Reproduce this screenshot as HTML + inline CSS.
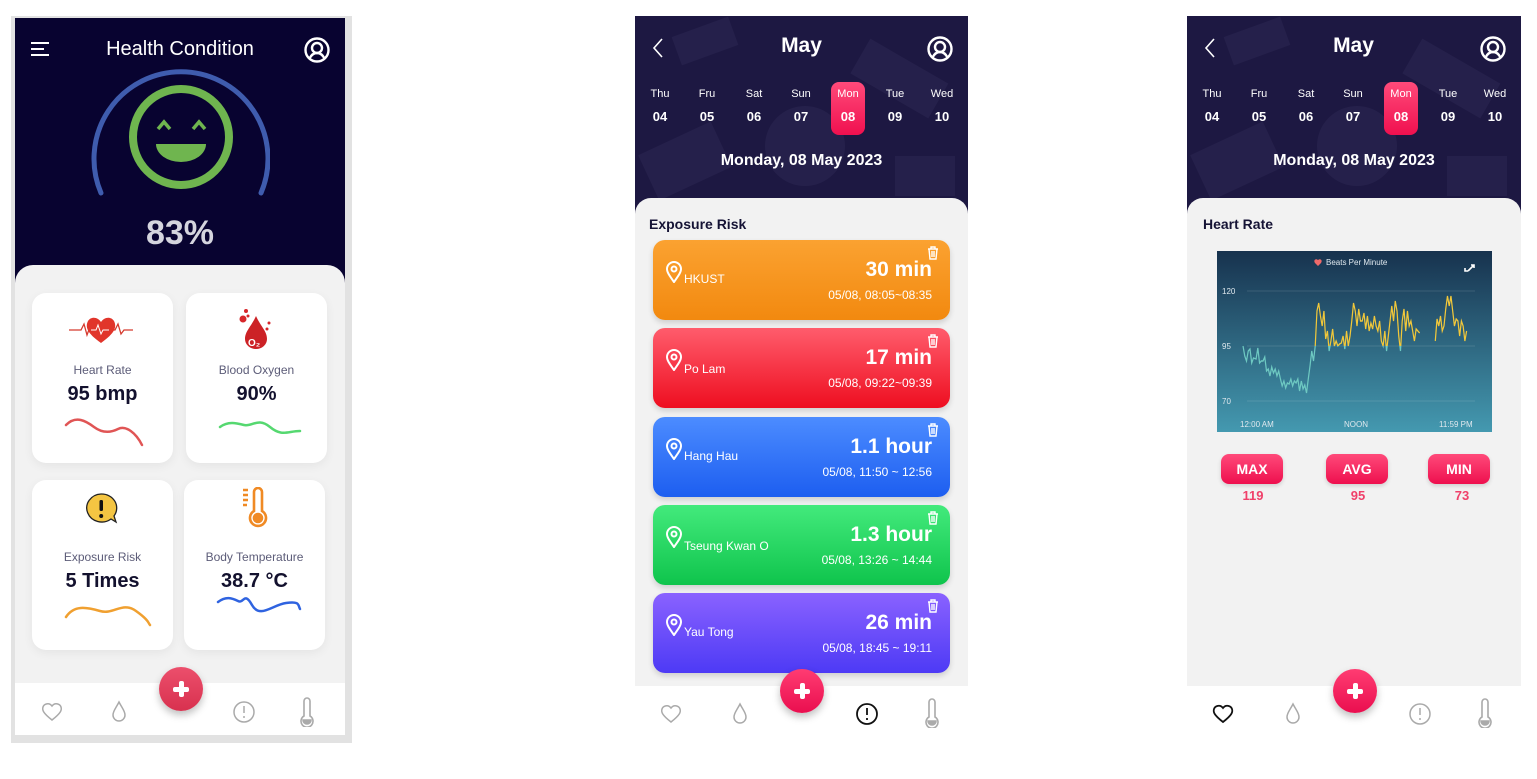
<!DOCTYPE html>
<html><head><meta charset="utf-8"><style>
*{margin:0;padding:0;box-sizing:border-box}
body{width:1537px;height:779px;background:#fff;position:relative;overflow:hidden;font-family:"Liberation Sans",Arial,sans-serif}
.a{position:absolute}
.hdr{background:#1d1842;overflow:hidden}
.card{position:absolute;background:#fff;border-radius:14px;box-shadow:0 3px 10px rgba(0,0,0,.06);text-align:center}
.card .l{position:absolute;left:0;right:0;top:70px;font-size:12px;color:#5c5c78}
.card .v{position:absolute;left:0;right:0;top:90px;font-size:20px;font-weight:bold;color:#13112e}
.day{position:absolute;width:34px;text-align:center;color:#fff;font-size:11px}
.day b{display:block;font-size:13px;margin-top:9px}
.sel{background:linear-gradient(#ff4a7a,#f0104f);border-radius:8px;height:53px;padding-top:6px}
.er{position:absolute;left:18px;width:297px;height:80px;border-radius:12px;color:#fff;box-shadow:0 3px 6px rgba(0,0,0,.15)}
.er .t{position:absolute;right:18px;top:18px;font-size:21px;font-weight:bold}
.er .d{position:absolute;right:18px;top:48px;font-size:12px}
.er .p{position:absolute;left:31px;top:32px;font-size:12px}
.er svg.pin{position:absolute;left:13px;top:21px}
.er svg.tr{position:absolute;right:11px;top:6px}
.fab{position:absolute;width:44px;height:44px;border-radius:50%;background:linear-gradient(#ff3c72,#ea0e4f);box-shadow:0 4px 8px rgba(0,0,0,.25)}
.fab:before{content:"";position:absolute;left:14px;top:19.5px;width:16px;height:5px;background:#fff;border-radius:2px}
.fab:after{content:"";position:absolute;left:19.5px;top:14px;width:5px;height:16px;background:#fff;border-radius:2px}
.btn{position:absolute;width:62px;height:30px;border-radius:8px;background:linear-gradient(#ff4a7a,#ee0f4e);color:#fff;font-weight:bold;font-size:14px;text-align:center;line-height:30px;box-shadow:0 2px 4px rgba(0,0,0,.15)}
.num{position:absolute;width:62px;text-align:center;color:#f0406a;font-weight:bold;font-size:13px}
</style></head><body>

<!-- Phone 1 -->
<div class="a" style="left:11px;top:16px;width:341px;height:727px;background:#e2e2e2"></div>
<div class="a hdr" style="left:15px;top:18px;width:330px;height:270px;background:#080330"></div>
<div class="a" style="left:31px;top:42px;width:18px;height:2px;background:#fff"></div>
<div class="a" style="left:31px;top:48px;width:13px;height:2px;background:#fff"></div>
<div class="a" style="left:31px;top:54px;width:18px;height:2px;background:#fff"></div>
<div class="a" style="left:80px;top:38px;width:200px;text-align:center;color:#fff;font-size:20px">Health Condition</div>
<svg class="a" style="left:303px;top:36px" width="28" height="28" viewBox="0 0 28 28" fill="none" stroke="#fff" stroke-width="2.4"><circle cx="14" cy="14" r="11.5"/><circle cx="14" cy="12" r="5"/><path d="M6.5 22.5c2-4 5-5.5 7.5-5.5s5.5 1.5 7.5 5.5"/></svg>
<svg class="a" style="left:90px;top:60px" width="180" height="145" viewBox="0 0 180 145" fill="none"><path d="M11 133 A87 87 0 1 1 171 133" stroke="#3f5cae" stroke-width="5" stroke-linecap="round"/><circle cx="91" cy="77" r="48" stroke="#6fb54f" stroke-width="8"/><path d="M68 69l6-7 6 7M103 69l6-7 6 7" stroke="#6fb54f" stroke-width="3.5"/><path d="M66 84h50a25 18 0 0 1-50 0z" fill="#6fb54f"/></svg>
<div class="a" style="left:80px;top:214px;width:200px;text-align:center;color:#d5d5de;font-size:34px;font-weight:bold">83%</div>
<div class="a" style="left:15px;top:265px;width:330px;height:420px;background:#f2f2f2;border-radius:18px 18px 0 0"></div>
<div class="card" style="left:32px;top:293px;width:141px;height:170px">
<svg class="a" style="left:37px;top:22px" width="64" height="30" viewBox="0 0 64 30" fill="none"><path d="M0 15h12l3-6 3 11 3-8h6M40 15h6l3-6 3 10 3-4h9" stroke="#d53a2e" stroke-width="1.3"/><path d="M32 28C18 18 16 12 19 6c3-5 10-4 13 1 3-5 10-6 13-1 3 6 1 12-13 22z" fill="#e1352b"/><path d="M22 15h5l2-5 3 9 2-4h6" stroke="#fff" stroke-width="1"/></svg>
<div class="l">Heart Rate</div><div class="v">95 bmp</div>
<svg class="a" style="left:32px;top:122px" width="80" height="32" viewBox="0 0 80 32" fill="none"><path d="M2 10C12 0 22 6 30 12s16 6 24 2 18 4 24 16" stroke="#e05555" stroke-width="2.5" stroke-linecap="round"/></svg></div>
<div class="card" style="left:186px;top:293px;width:141px;height:170px">
<svg class="a" style="left:50px;top:13px" width="40" height="46" viewBox="0 0 40 46"><circle cx="10" cy="5" r="2" fill="#d7262a"/><circle cx="7" cy="13" r="3.5" fill="#d7262a"/><circle cx="12" cy="10" r="1.5" fill="#d7262a"/><circle cx="33" cy="17" r="1.5" fill="#d7262a"/><circle cx="31" cy="23" r="1.5" fill="#d7262a"/><path d="M20 10C15 21 9 25 9 33a11 10 0 0 0 22 0c0-8-6-12-11-23z" fill="#cc2226"/><text x="12" y="40" font-size="10" font-weight="bold" fill="#fff" font-family="Liberation Sans">O₂</text></svg>
<div class="l">Blood Oxygen</div><div class="v">90%</div>
<svg class="a" style="left:32px;top:124px" width="84" height="20" viewBox="0 0 84 20" fill="none"><path d="M2 10C10 4 18 6 26 8s14-8 26 2 18 4 30 4" stroke="#55d870" stroke-width="2.5" stroke-linecap="round"/></svg></div>
<div class="card" style="left:32px;top:480px;width:141px;height:170px">
<svg class="a" style="left:52px;top:12px" width="36" height="34" viewBox="0 0 36 34"><path d="M17 2a15 14 0 1 0 10 25l5 3-2-6A15 14 0 0 0 17 2z" fill="#f4c542" stroke="#222" stroke-width="1.3"/><rect x="15.5" y="8" width="3.5" height="11" rx="1.5" fill="#111"/><circle cx="17.2" cy="24" r="2" fill="#111"/></svg>
<div class="l">Exposure Risk</div><div class="v">5 Times</div>
<svg class="a" style="left:32px;top:115px" width="88" height="32" viewBox="0 0 88 32" fill="none"><path d="M2 22C10 10 22 12 36 16s22-10 36 0 12 12 14 14" stroke="#f0a030" stroke-width="2.5" stroke-linecap="round"/></svg></div>
<div class="card" style="left:184px;top:480px;width:141px;height:170px">
<svg class="a" style="left:56px;top:7px" width="30" height="42" viewBox="0 0 30 42" fill="none" stroke="#f08a24" stroke-width="2.6"><path d="M3 3h5M3 8h5M3 13h5M3 18h4"/><path d="M14 24V5a4 4 0 0 1 8 0v19a8 8 0 1 1-8 0z"/><circle cx="18" cy="31" r="4" fill="#f08a24"/></svg>
<div class="l">Body Temperature</div><div class="v">38.7 °C</div>
<svg class="a" style="left:32px;top:112px" width="86" height="24" viewBox="0 0 86 24" fill="none"><path d="M2 10c8-6 14-4 20-1s6-10 14 4 20 0 34-2 12 2 14 6" stroke="#2f63e0" stroke-width="2.5" stroke-linecap="round"/></svg></div>
<div class="a" style="left:15px;top:683px;width:330px;height:52px;background:#fff"></div>
<div class="fab" style="left:159px;top:667px;background:linear-gradient(#ec4f6c,#d8314f)"></div>
<svg class="a" style="left:41px;top:702px" width="22" height="20" viewBox="0 0 22 20" fill="none" stroke="#aaa" stroke-width="1.5"><path d="M11 18C2 11 1 8 2 5s6-5 9-1c3-4 8-2 9 1s0 6-9 13z"/></svg>
<svg class="a" style="left:110px;top:700px" width="18" height="22" viewBox="0 0 18 22" fill="none" stroke="#aaa" stroke-width="1.5"><path d="M9 2C6 8 3 11 3 15a6 6 0 0 0 12 0c0-4-3-7-6-13z"/></svg>
<svg class="a" style="left:232px;top:700px" width="24" height="24" viewBox="0 0 24 24" fill="none" stroke="#aaa" stroke-width="1.5"><circle cx="12" cy="12" r="10"/><path d="M12 6v7M12 16v2"/></svg>
<svg class="a" style="left:298px;top:697px" width="18" height="30" viewBox="0 0 18 30" fill="none" stroke="#aaa" stroke-width="1.6"><path d="M6 19V4a3 3 0 0 1 6 0v15a6 6 0 1 1-6 0z"/><path d="M5 23a4 4 0 0 0 8 0z" fill="#aaa"/></svg>

<!-- Phone 2 & 3 headers -->
<div class="a hdr" style="left:635px;top:16px;width:333px;height:200px">
<svg width="333" height="200" style="opacity:.3"><g fill="#3a3560"><rect x="40" y="10" width="60" height="30" transform="rotate(-20 70 25)"/><rect x="220" y="40" width="90" height="40" transform="rotate(30 260 60)"/><rect x="10" y="120" width="80" height="50" transform="rotate(-25 50 145)"/><circle cx="170" cy="130" r="40"/><rect x="260" y="140" width="60" height="40"/></g></svg></div>
<div class="a hdr" style="left:1187px;top:16px;width:334px;height:200px">
<svg width="334" height="200" style="opacity:.3"><g fill="#3a3560"><rect x="40" y="10" width="60" height="30" transform="rotate(-20 70 25)"/><rect x="220" y="40" width="90" height="40" transform="rotate(30 260 60)"/><rect x="10" y="120" width="80" height="50" transform="rotate(-25 50 145)"/><circle cx="170" cy="130" r="40"/><rect x="260" y="140" width="60" height="40"/></g></svg></div>

<svg class="a" style="left:652px;top:38px" width="12" height="20" viewBox="0 0 12 20" fill="none" stroke="#fff" stroke-width="1.6"><path d="M10 1L2 10l8 9"/></svg>
<div class="a" style="left:735px;top:34px;width:133px;text-align:center;color:#fff;font-size:21px;font-weight:bold">May</div>
<svg class="a" style="left:926px;top:35px" width="28" height="28" viewBox="0 0 28 28" fill="none" stroke="#fff" stroke-width="2.4"><circle cx="14" cy="14" r="11.5"/><circle cx="14" cy="12" r="5"/><path d="M6.5 22.5c2-4 5-5.5 7.5-5.5s5.5 1.5 7.5 5.5"/></svg>
<div class="day" style="left:643px;top:88px">Thu<b>04</b></div>
<div class="day" style="left:690px;top:88px">Fru<b>05</b></div>
<div class="day" style="left:737px;top:88px">Sat<b>06</b></div>
<div class="day" style="left:784px;top:88px">Sun<b>07</b></div>
<div class="day sel" style="left:831px;top:82px">Mon<b>08</b></div>
<div class="day" style="left:878px;top:88px">Tue<b>09</b></div>
<div class="day" style="left:925px;top:88px">Wed<b>10</b></div>
<div class="a" style="left:635px;top:152px;width:333px;text-align:center;color:#fff;font-size:16px;font-weight:bold">Monday, 08 May 2023</div>

<svg class="a" style="left:1204px;top:38px" width="12" height="20" viewBox="0 0 12 20" fill="none" stroke="#fff" stroke-width="1.6"><path d="M10 1L2 10l8 9"/></svg>
<div class="a" style="left:1287px;top:34px;width:133px;text-align:center;color:#fff;font-size:21px;font-weight:bold">May</div>
<svg class="a" style="left:1479px;top:35px" width="28" height="28" viewBox="0 0 28 28" fill="none" stroke="#fff" stroke-width="2.4"><circle cx="14" cy="14" r="11.5"/><circle cx="14" cy="12" r="5"/><path d="M6.5 22.5c2-4 5-5.5 7.5-5.5s5.5 1.5 7.5 5.5"/></svg>
<div class="day" style="left:1195px;top:88px">Thu<b>04</b></div>
<div class="day" style="left:1242px;top:88px">Fru<b>05</b></div>
<div class="day" style="left:1289px;top:88px">Sat<b>06</b></div>
<div class="day" style="left:1336px;top:88px">Sun<b>07</b></div>
<div class="day sel" style="left:1384px;top:82px">Mon<b>08</b></div>
<div class="day" style="left:1431px;top:88px">Tue<b>09</b></div>
<div class="day" style="left:1478px;top:88px">Wed<b>10</b></div>
<div class="a" style="left:1187px;top:152px;width:334px;text-align:center;color:#fff;font-size:16px;font-weight:bold">Monday, 08 May 2023</div>

<!-- Phone 2 content -->
<div class="a" style="left:635px;top:198px;width:333px;height:490px;background:#f2f2f2;border-radius:16px 16px 0 0">
<div class="a" style="left:14px;top:18px;font-size:14px;font-weight:bold;color:#151335">Exposure Risk</div>
<div class="er" style="top:42px;background:linear-gradient(#fba231,#f2890f)"><svg class="pin" width="16" height="22" viewBox="0 0 16 22" fill="none" stroke="#fff" stroke-width="2"><path d="M8 21C3 14 1 11 1 8a7 7 0 0 1 14 0c0 3-2 6-7 13z"/><circle cx="8" cy="8" r="2.5"/></svg><svg class="tr" width="12" height="14" viewBox="0 0 12 14" fill="none" stroke="#fff" stroke-width="1.4"><path d="M1 3h10M4 3V1h4v2M2 3l1 10h6l1-10M5 5v6M7 5v6"/></svg><div class="p">HKUST</div><div class="t">30 min</div><div class="d">05/08, 08:05~08:35</div></div>
<div class="er" style="top:130px;background:linear-gradient(#ff5c6c,#ee0e20)"><svg class="pin" width="16" height="22" viewBox="0 0 16 22" fill="none" stroke="#fff" stroke-width="2"><path d="M8 21C3 14 1 11 1 8a7 7 0 0 1 14 0c0 3-2 6-7 13z"/><circle cx="8" cy="8" r="2.5"/></svg><svg class="tr" width="12" height="14" viewBox="0 0 12 14" fill="none" stroke="#fff" stroke-width="1.4"><path d="M1 3h10M4 3V1h4v2M2 3l1 10h6l1-10M5 5v6M7 5v6"/></svg><div class="p" style="top:34px">Po Lam</div><div class="t">17 min</div><div class="d">05/08, 09:22~09:39</div></div>
<div class="er" style="top:219px;background:linear-gradient(#4c8cff,#1d5ef0)"><svg class="pin" width="16" height="22" viewBox="0 0 16 22" fill="none" stroke="#fff" stroke-width="2"><path d="M8 21C3 14 1 11 1 8a7 7 0 0 1 14 0c0 3-2 6-7 13z"/><circle cx="8" cy="8" r="2.5"/></svg><svg class="tr" width="12" height="14" viewBox="0 0 12 14" fill="none" stroke="#fff" stroke-width="1.4"><path d="M1 3h10M4 3V1h4v2M2 3l1 10h6l1-10M5 5v6M7 5v6"/></svg><div class="p">Hang Hau</div><div class="t">1.1 hour</div><div class="d">05/08, 11:50 ~ 12:56</div></div>
<div class="er" style="top:307px;background:linear-gradient(#43ea7c,#0fc44c)"><svg class="pin" width="16" height="22" viewBox="0 0 16 22" fill="none" stroke="#fff" stroke-width="2"><path d="M8 21C3 14 1 11 1 8a7 7 0 0 1 14 0c0 3-2 6-7 13z"/><circle cx="8" cy="8" r="2.5"/></svg><svg class="tr" width="12" height="14" viewBox="0 0 12 14" fill="none" stroke="#fff" stroke-width="1.4"><path d="M1 3h10M4 3V1h4v2M2 3l1 10h6l1-10M5 5v6M7 5v6"/></svg><div class="p" style="top:34px">Tseung Kwan O</div><div class="t">1.3 hour</div><div class="d">05/08,  13:26 ~ 14:44</div></div>
<div class="er" style="top:395px;background:linear-gradient(#8a62ff,#4d3af5)"><svg class="pin" width="16" height="22" viewBox="0 0 16 22" fill="none" stroke="#fff" stroke-width="2"><path d="M8 21C3 14 1 11 1 8a7 7 0 0 1 14 0c0 3-2 6-7 13z"/><circle cx="8" cy="8" r="2.5"/></svg><svg class="tr" width="12" height="14" viewBox="0 0 12 14" fill="none" stroke="#fff" stroke-width="1.4"><path d="M1 3h10M4 3V1h4v2M2 3l1 10h6l1-10M5 5v6M7 5v6"/></svg><div class="p">Yau Tong</div><div class="t">26 min</div><div class="d">05/08,  18:45 ~ 19:11</div></div>
</div>
<div class="a" style="left:635px;top:686px;width:333px;height:54px;background:#fff"></div>
<div class="fab" style="left:780px;top:669px"></div>
<svg class="a" style="left:660px;top:704px" width="22" height="20" viewBox="0 0 22 20" fill="none" stroke="#aaa" stroke-width="1.5"><path d="M11 18C2 11 1 8 2 5s6-5 9-1c3-4 8-2 9 1s0 6-9 13z"/></svg>
<svg class="a" style="left:731px;top:702px" width="18" height="22" viewBox="0 0 18 22" fill="none" stroke="#aaa" stroke-width="1.5"><path d="M9 2C6 8 3 11 3 15a6 6 0 0 0 12 0c0-4-3-7-6-13z"/></svg>
<svg class="a" style="left:855px;top:702px" width="24" height="24" viewBox="0 0 24 24" fill="none" stroke="#111" stroke-width="1.8"><circle cx="12" cy="12" r="10"/><path d="M12 6v7M12 16v2"/></svg>
<svg class="a" style="left:923px;top:698px" width="18" height="30" viewBox="0 0 18 30" fill="none" stroke="#aaa" stroke-width="1.6"><path d="M6 19V4a3 3 0 0 1 6 0v15a6 6 0 1 1-6 0z"/><path d="M5 23a4 4 0 0 0 8 0z" fill="#aaa"/></svg>

<!-- Phone 3 content -->
<div class="a" style="left:1187px;top:198px;width:334px;height:488px;background:#f2f2f2;border-radius:16px 16px 0 0">
<div class="a" style="left:16px;top:18px;font-size:14px;font-weight:bold;color:#151335">Heart Rate</div></div>
<svg class="a" style="left:1217px;top:251px" width="275" height="181" viewBox="0 0 275 181">
<defs><linearGradient id="g" x1="0" y1="0" x2="0" y2="1"><stop offset="0" stop-color="#17324e"/><stop offset="1" stop-color="#4499b0"/></linearGradient>
<clipPath id="top"><rect x="0" y="0" width="300" height="95"/></clipPath><clipPath id="bot"><rect x="0" y="95" width="300" height="90"/></clipPath>
<polyline id="pl" points="26,95 28,105 30,110 32,100 34,98 36,112 38,107 41,108 43,97 45,112 47,110 49,110 51,106 53,120 55,118 57,125 59,116 61,122 63,118 65,125 67,120 69,128 71,135 73,130 75,137 77,132 79,133 81,128 83,135 85,130 87,132 89,128 91,140 93,130 95,138 97,134 99,142 101,128 103,115 105,100 107,110 109,95 111,60 113,52 115,65 117,75 119,60 121,88 123,80 125,100 127,90 129,78 131,95 133,90 135,95 137,93 139,92 141,85 143,98 145,80 147,95 149,85 151,70 153,52 155,60 157,75 159,58 161,70 163,70 165,62 167,78 169,65 171,80 173,72 175,78 177,65 179,75 181,80 183,70 185,90 187,95 189,80 191,100 193,85 195,70 197,55 199,70 201,50 203,60 205,85 207,100 209,70 211,58 213,80 215,60 217,75 219,70 221,80 223,90 225,78 227,80 229,82"/></defs>
<rect width="275" height="181" fill="url(#g)"/>
<g stroke="#ffffff" stroke-opacity=".12"><path d="M30 40H258M30 95H258M30 150H258"/></g>
<g font-family="Liberation Sans" font-size="8" fill="#dfe8ee"><text x="5" y="43">120</text><text x="5" y="98">95</text><text x="5" y="153">70</text><text x="23" y="176">12:00 AM</text><text x="127" y="176">NOON</text><text x="222" y="176">11:59 PM</text><text x="109" y="14">Beats Per Minute</text></g>
<path d="M101 9c-2-2-5 0-3 3l3 3 3-3c2-3-1-5-3-3z" fill="#f06a6a"/>
<path d="M251 20l6-6M254 14h3v3M251 20h-3v-3M248 17v3h3" stroke="#fff" stroke-width="1.6" fill="none"/>
<g fill="none" stroke-width="1.4">
<g clip-path="url(#top)"><use href="#pl" stroke="#f2c83a" transform="translate(3.4 0) scale(0.87 1)"/></g>
<g clip-path="url(#bot)"><use href="#pl" stroke="#6ec9c2" transform="translate(3.4 0) scale(0.87 1)"/></g>
<polyline transform="translate(3.4 0) scale(0.87 1)" points="247,90 249,68 251,75 253,65 255,80 257,75 259,58 261,45 263,55 265,45 267,60 269,75 271,68 273,70 275,85 277,70 279,75 281,90 283,80" stroke="#f2c83a"/>
</g></svg>
<div class="btn" style="left:1221px;top:454px">MAX</div><div class="num" style="left:1222px;top:488px">119</div>
<div class="btn" style="left:1326px;top:454px">AVG</div><div class="num" style="left:1327px;top:488px">95</div>
<div class="btn" style="left:1428px;top:454px">MIN</div><div class="num" style="left:1431px;top:488px">73</div>
<div class="fab" style="left:1333px;top:669px"></div>
<svg class="a" style="left:1212px;top:704px" width="22" height="20" viewBox="0 0 22 20" fill="none" stroke="#111" stroke-width="1.8"><path d="M11 18C2 11 1 8 2 5s6-5 9-1c3-4 8-2 9 1s0 6-9 13z"/></svg>
<svg class="a" style="left:1284px;top:702px" width="18" height="22" viewBox="0 0 18 22" fill="none" stroke="#aaa" stroke-width="1.5"><path d="M9 2C6 8 3 11 3 15a6 6 0 0 0 12 0c0-4-3-7-6-13z"/></svg>
<svg class="a" style="left:1408px;top:702px" width="24" height="24" viewBox="0 0 24 24" fill="none" stroke="#aaa" stroke-width="1.5"><circle cx="12" cy="12" r="10"/><path d="M12 6v7M12 16v2"/></svg>
<svg class="a" style="left:1476px;top:698px" width="18" height="30" viewBox="0 0 18 30" fill="none" stroke="#aaa" stroke-width="1.6"><path d="M6 19V4a3 3 0 0 1 6 0v15a6 6 0 1 1-6 0z"/><path d="M5 23a4 4 0 0 0 8 0z" fill="#aaa"/></svg>
</body></html>
